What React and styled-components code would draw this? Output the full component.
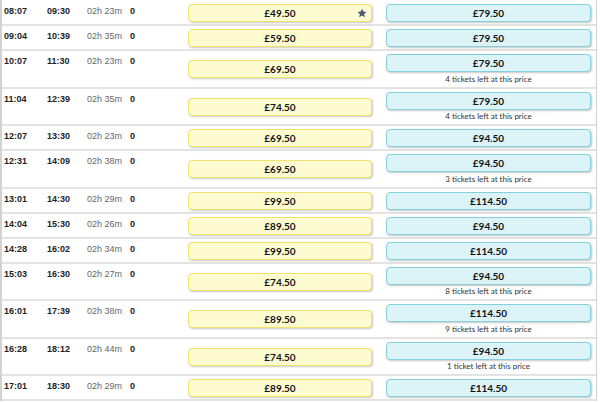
import React from "react";
import styled, { createGlobalStyle } from "styled-components";

const Global = createGlobalStyle`
  html, body { margin: 0; padding: 0; background: #fff; }
  body { width: 600px; height: 402px; overflow: hidden; }
`;

const Table = styled.div`
  width: 594px;
  padding-top: 1px;
  border-left: 2px solid #d2d2d2;
  border-right: 1px solid #d2d2d2;
  background: #fff;
`;

const Row = styled.div`
  display: grid;
  grid-template-columns: 43px 40px 43px 58px 184px 205px;
  align-items: start;
  padding-left: 2px;
  border-bottom: 2px solid #e3e3e3;
  box-sizing: border-box;
`;

const Cell = styled.div`
  font-family: "Liberation Sans", Arial, sans-serif;
  font-size: 9px;
  line-height: 11px;
  padding-top: 5px;
  color: ${(p) => (p.$muted ? "#666" : "#222")};
  font-weight: ${(p) => (p.$muted ? 400 : 700)};
  white-space: nowrap;
`;

const FareCell = styled.div`
  align-self: stretch;
  display: flex;
  flex-direction: column;
  justify-content: ${(p) => (p.$center ? "center" : "flex-start")};
  align-items: stretch;
  padding: 3px 0 2px 0;
  margin-left: ${(p) => (p.$second ? "14px" : "0")};
  margin-right: ${(p) => (p.$second ? "-14px" : "0")};
`;

const Fare = styled.div`
  position: relative;
  height: 18px;
  box-sizing: border-box;
  border-radius: 4px;
  border: 1px solid ${(p) => (p.$blue ? "#84d0dc" : "#f2e46a")};
  background: ${(p) => (p.$blue ? "#dcf3f8" : "#fffbd0")};
  box-shadow: 1px 1px 2px rgba(0, 0, 0, 0.22);
  display: flex;
  align-items: center;
  justify-content: center;
  font-family: Lato, "Open Sans", sans-serif;
  font-weight: 700;
  font-size: 10px;
  color: #111;
`;

const Star = styled.svg`
  position: absolute;
  right: 4px;
  top: 3px;
  width: 10px;
  height: 10px;
`;

const Note = styled.div`
  font-family: Lato, "Open Sans", sans-serif;
  font-size: 8px;
  line-height: 11px;
  margin-top: 1.5px;
  text-align: center;
  color: #333;
`;

const rows = [
  ["08:07", "09:30", "02h 23m", "£49.50", "£79.50", null, true],
  ["09:04", "10:39", "02h 35m", "£59.50", "£79.50", null],
  ["10:07", "11:30", "02h 23m", "£69.50", "£79.50", "4 tickets left at this price"],
  ["11:04", "12:39", "02h 35m", "£74.50", "£79.50", "4 tickets left at this price"],
  ["12:07", "13:30", "02h 23m", "£69.50", "£94.50", null],
  ["12:31", "14:09", "02h 38m", "£69.50", "£94.50", "3 tickets left at this price"],
  ["13:01", "14:30", "02h 29m", "£99.50", "£114.50", null],
  ["14:04", "15:30", "02h 26m", "£89.50", "£94.50", null],
  ["14:28", "16:02", "02h 34m", "£99.50", "£114.50", null],
  ["15:03", "16:30", "02h 27m", "£74.50", "£94.50", "8 tickets left at this price"],
  ["16:01", "17:39", "02h 38m", "£89.50", "£114.50", "9 tickets left at this price"],
  ["16:28", "18:12", "02h 44m", "£74.50", "£94.50", "1 ticket left at this price"],
  ["17:01", "18:30", "02h 29m", "£89.50", "£114.50", null],
];

export default function App() {
  return (
    <>
      <Global />
      <Table>
        {rows.map(([dep, arr, dur, std, first, note, star], i) => (
          <Row key={i}>
            <Cell>{dep}</Cell>
            <Cell>{arr}</Cell>
            <Cell $muted>{dur}</Cell>
            <Cell>0</Cell>
            <FareCell $center>
              <Fare>
                {std}
                {star && (
                  <Star viewBox="0 0 24 24">
                    <path
                      d="M12 1.5l3.2 7 7.6.8-5.7 5.1 1.6 7.5L12 18l-6.7 3.9 1.6-7.5L1.2 9.3l7.6-.8z"
                      fill="#4b5878"
                    />
                  </Star>
                )}
              </Fare>
            </FareCell>
            <FareCell $second>
              <Fare $blue>{first}</Fare>
              {note && <Note>{note}</Note>}
            </FareCell>
          </Row>
        ))}
      </Table>
    </>
  );
}
